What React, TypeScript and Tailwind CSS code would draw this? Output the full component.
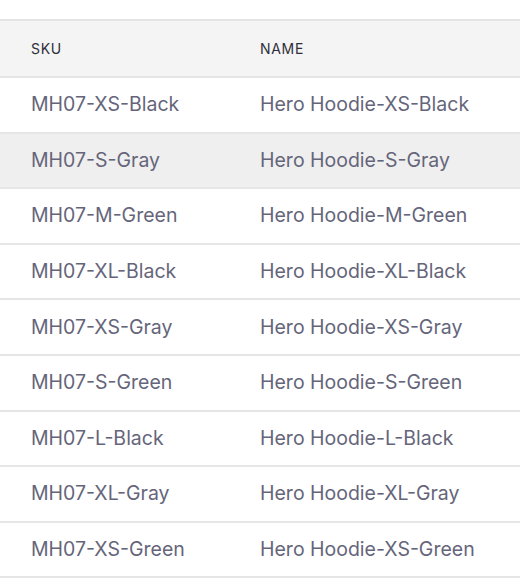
const rows = [
  ["MH07-XS-Black", "Hero Hoodie-XS-Black"],
  ["MH07-S-Gray", "Hero Hoodie-S-Gray"],
  ["MH07-M-Green", "Hero Hoodie-M-Green"],
  ["MH07-XL-Black", "Hero Hoodie-XL-Black"],
  ["MH07-XS-Gray", "Hero Hoodie-XS-Gray"],
  ["MH07-S-Green", "Hero Hoodie-S-Green"],
  ["MH07-L-Black", "Hero Hoodie-L-Black"],
  ["MH07-XL-Gray", "Hero Hoodie-XL-Gray"],
  ["MH07-XS-Green", "Hero Hoodie-XS-Green"],
];

export default function App() {
  return (
    <div className="min-h-screen bg-white pt-[19px] font-['Inter','Liberation_Sans',sans-serif]">
      <table className="w-full border-collapse">
        <thead>
          {/* Header */}
          <tr className="h-[57px] border-y-2 border-[#e4e4e4] bg-[#f4f4f4]">
            <th className="w-[260px] pl-[31px] text-left text-[14px] font-normal uppercase tracking-[0.05em] text-[#2f2f3a]">
              SKU
            </th>
            <th className="text-left text-[14px] font-normal uppercase tracking-[0.05em] text-[#2f2f3a]">
              Name
            </th>
          </tr>
        </thead>
        <tbody>
          {rows.map(([sku, name], i) => (
            <tr
              key={sku}
              className={`h-[55.6px] border-b-2 border-[#e6e6e6] ${i === 1 ? "bg-[#efefef]" : "bg-white"}`}
            >
              <td className="pl-[31px] text-[19.5px] text-[#65657a]">{sku}</td>
              <td className="text-[19.5px] text-[#65657a]">{name}</td>
            </tr>
          ))}
        </tbody>
      </table>
    </div>
  );
}
